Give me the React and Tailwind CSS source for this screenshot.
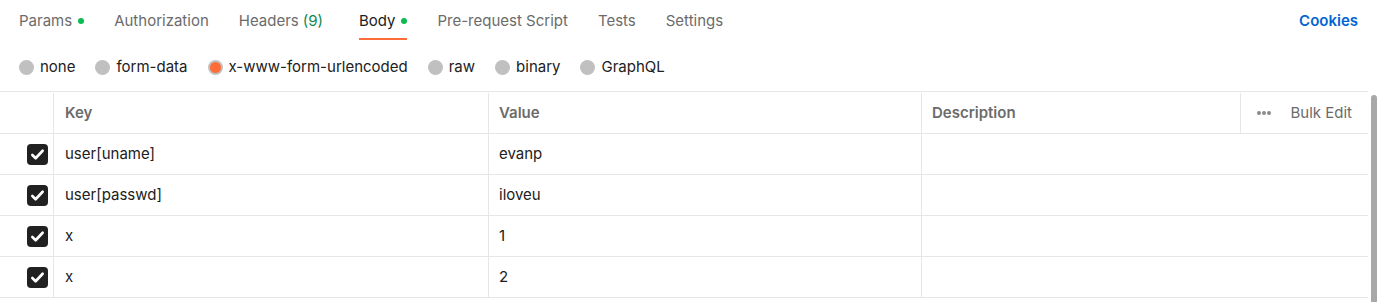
import React from 'react'

const tabs = [
  { label: 'Params', dot: true },
  { label: 'Authorization' },
  { label: 'Headers', count: '(9)' },
  { label: 'Body', dot: true, active: true },
  { label: 'Pre-request Script' },
  { label: 'Tests' },
  { label: 'Settings' },
]

const modes = ['none', 'form-data', 'x-www-form-urlencoded', 'raw', 'binary', 'GraphQL']

const rows = [
  { key: 'user[uname]', value: 'evanp' },
  { key: 'user[passwd]', value: 'iloveu' },
  { key: 'x', value: '1' },
  { key: 'x', value: '2' },
]

function Check() {
  return (
    <span className="flex h-[21px] w-[21px] items-center justify-center rounded-[4px] bg-[#212121]">
      <svg width="15" height="15" viewBox="0 0 16 16" fill="none">
        <path d="M2.5 8.5l3.5 3.5 7.5-8" stroke="#fff" strokeWidth="2.8" strokeLinecap="round" strokeLinejoin="round" />
      </svg>
    </span>
  )
}

export default function App() {
  return (
    <div className="relative h-[302px] w-[1377px] overflow-hidden bg-white font-['Inter',sans-serif] text-[15px] text-[#212121]">
      <div className="flex h-[41px] items-start justify-between pl-[19px] pr-[19px]">
        <div className="flex gap-[30px]">
          {tabs.map((t) => (
            <div key={t.label} className={`flex flex-col ${t.count ? 'mr-[6px]' : ''}`}>
              <div className={`flex h-[38px] items-center gap-[6px] pt-[4px] ${t.active ? 'text-[#212121]' : 'text-[#6b6b6b]'}`}>
                <span>{t.label}</span>
                {t.count && <span className="-ml-[2px] text-[#0f8a52]">{t.count}</span>}
                {t.dot && <span className="h-[6px] w-[6px] rounded-full bg-[#0cbb52]" />}
              </div>
              <div className={`h-[2px] ${t.active ? 'bg-[#ff6c37]' : ''}`} />
            </div>
          ))}
        </div>
        <div className="flex h-[38px] items-center pt-[4px] font-semibold text-[#0265d2]">Cookies</div>
      </div>

      <div className="flex h-[50px] items-center gap-[20px] pl-[19px] pt-[2px]">
        {modes.map((m) => (
          <div key={m} className="flex items-center gap-[6px]">
            {m === 'x-www-form-urlencoded' ? (
              <span className="flex h-[15px] w-[15px] items-center justify-center rounded-full bg-[#c0c0c0]">
                <span className="h-[11px] w-[11px] rounded-full bg-[#ff6c37]" />
              </span>
            ) : (
              <span className="h-[15px] w-[15px] rounded-full bg-[#c0c0c0]" />
            )}
            <span className="text-[#212121]">{m}</span>
          </div>
        ))}
      </div>

      <div className="flex">
        <div className="w-[1368px] border-t border-[#e6e6e6]">
          <div className="flex h-[42px] border-b border-[#e6e6e6] pt-[1px] font-semibold text-[#6b6b6b]">
            <div className="w-[54px] border-r border-[#e6e6e6]" />
            <div className="flex w-[435px] items-center border-r border-[#e6e6e6] pl-[11px]">Key</div>
            <div className="flex w-[433px] items-center border-r border-[#e6e6e6] pl-[10px]">Value</div>
            <div className="flex w-[319px] items-center border-r border-[#e6e6e6] pl-[10px]">Description</div>
            <div className="flex flex-1 items-center justify-between pl-[16px] pr-[16px] font-normal">
              <span className="flex gap-[1px]">
                <span className="h-[4px] w-[4px] rounded-full bg-[#8a8a8a]" />
                <span className="h-[4px] w-[4px] rounded-full bg-[#8a8a8a]" />
                <span className="h-[4px] w-[4px] rounded-full bg-[#8a8a8a]" />
              </span>
              <span className="text-[#6b6b6b]">Bulk Edit</span>
            </div>
          </div>
          {rows.map((r, i) => (
            <div key={i} className="flex h-[41px] border-b border-[#e6e6e6]">
              <div className="flex w-[54px] items-center justify-end border-r border-[#e6e6e6] pr-[5px]">
                <Check />
              </div>
              <div className="flex w-[435px] items-center border-r border-[#e6e6e6] pl-[11px]">{r.key}</div>
              <div className="flex w-[433px] items-center border-r border-[#e6e6e6] pl-[10px]">{r.value}</div>
              <div className="flex-1" />
            </div>
          ))}
        </div>
        <div className="ml-[3px] mt-[4px] h-[220px] w-[6px] rounded-t-[4px] bg-[#a8a8a8]" />
      </div>
    </div>
  )
}
